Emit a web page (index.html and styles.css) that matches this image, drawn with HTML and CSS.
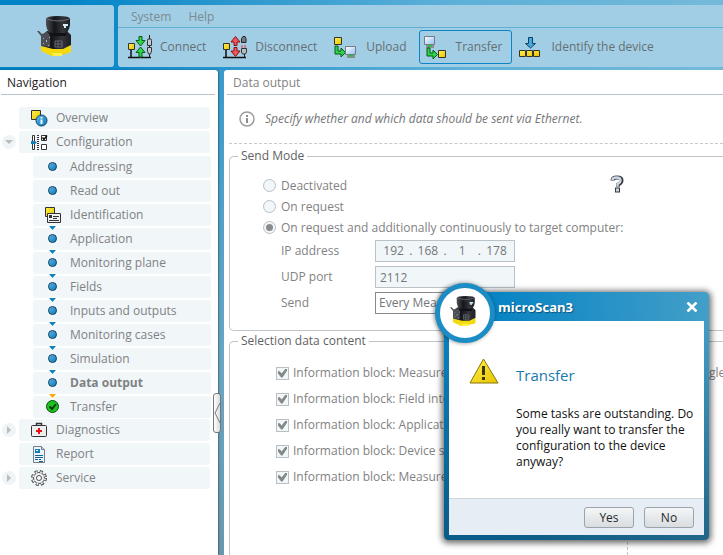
FILE: index.html
```html
<!DOCTYPE html>
<html lang="en">
<head>
<meta charset="utf-8">
<title>microScan3</title>
<link rel="stylesheet" href="styles.css">
</head>
<body>
<svg class="defs" aria-hidden="true">
  <defs>
    <linearGradient id="gYellow" x1="0" y1="0" x2="1" y2="1"><stop offset="0" stop-color="#fff04a"/><stop offset="1" stop-color="#e8c400"/></linearGradient>
    <linearGradient id="gBlue" x1="0" y1="0" x2="1" y2="1"><stop offset="0" stop-color="#5cb8ea"/><stop offset="1" stop-color="#0e78b8"/></linearGradient>
    <linearGradient id="gScreen" x1="0" y1="0" x2="1" y2="1"><stop offset="0" stop-color="#fff"/><stop offset="1" stop-color="#8fc0f4"/></linearGradient>
    <linearGradient id="gDark" x1="0" y1="0" x2="1" y2="0"><stop offset="0" stop-color="#4d5056"/><stop offset=".35" stop-color="#15161a"/><stop offset=".7" stop-color="#33353b"/><stop offset="1" stop-color="#1d1e22"/></linearGradient>
    <symbol id="device" viewBox="0 0 36 40">
      <path d="M4 27 34 29v7q-4 2-7 2l-5 2h-7L4 35z" fill="#f5d90f"/>
      <path d="M15 37h10v3h-9z" fill="#fff04a"/>
      <path d="M10 15h20l4 4v10l-8 4H16L4 30V20z" fill="url(#gDark)"/>
      <path d="M0 15l2 0 3 3 5-2 3 3v12l-9-2V20z" fill="#4b4e54"/>
      <path d="M6 22h1v1H6zM9 24h1v2H9zM6 27h1v1H6zM12 21h1v1h-1zM11 29h1v1h-1z" fill="#a9adb5"/>
      <path d="M12 15h18l-1 5H13z" fill="#111216"/>
      <path d="M9 3q0-3 12-3t12 3v6q-1 7-5 8H14q-4-1-5-8z" fill="url(#gDark)"/>
      <path d="M10 3q11 4 22 0" fill="none" stroke="#6a6d74"/>
      <path d="M26 8h5v2h-2v2h-2v-2h-1z" fill="#d5ecf5"/>
      <path d="M18 25h7v6h-7zM21 25v6M18 28h7" fill="none" stroke="#666970"/>
    </symbol>
    <symbol id="node" viewBox="0 0 24 24">
      <path d="M3 15v7M0 22.500h23" fill="none" stroke="#111" stroke-width="1.500"/>
      <path d="M.5 8.500h6v6h-6z" fill="url(#gYellow)" stroke="#333"/>
    </symbol>
    <symbol id="monitor" viewBox="0 0 12 12">
      <path d="M.5.500h10v8H.5z" fill="url(#gScreen)" stroke="#777b82"/>
      <path d="M2 9h8v3H2z" fill="#8b8e94"/><path d="M4 9h4v1.500H4z" fill="#18c92a"/>
    </symbol>
    <symbol id="elbow" viewBox="0 0 12 12"><path d="M1 1h3v5h3V3l4.500 4.500L7 12V9H1z" fill="#2fd44a" stroke="#075d16"/></symbol>
    <symbol id="dot" viewBox="0 0 16 22"><circle cx="7.500" cy="10.500" r="4" fill="url(#gBlue)" stroke="#173f5c"/></symbol>
    <symbol id="dotNext" viewBox="0 -3 16 25"><path d="M2-3h11L7.500 4z" fill="#fff"/><path d="M4-2h7L7.500 2z" fill="#0f80bb"/><circle cx="7.500" cy="10.500" r="4" fill="url(#gBlue)" stroke="#173f5c"/></symbol>
  </defs>
</svg>

<div class="app">
  <header class="top">
    <div class="brand"><svg width="36" height="40" role="img" aria-label="Laser scanner"><use href="#device"/></svg></div>
    <div class="bars">
      <nav class="menu"><a href="#system">System</a><a href="#help">Help</a></nav>
      <div class="toolbar">
        <button type="button"><svg width="24" height="24" viewBox="0 0 24 24"><use href="#node" width="24" height="24"/><path d="M11 1.500h3v4h3l-4.500 5.500L8 5.500h3zM11 22h3v-4.500h3L12.500 12 8 17.500h3z" fill="#2fd44a" stroke="#075d16"/><path d="M21.500 0v22" stroke="#222"/><path d="M19.500 5.500 20 4h3l.5 1.500v5h-4zM19.500 12.500h4V16l-1 3h-2l-1-3z" fill="#c6c9ce" stroke="#333"/></svg>Connect</button>
        <button type="button"><svg width="24" height="24" viewBox="0 0 24 24"><use href="#node" width="24" height="24"/><path d="M11 10.500h3V7h3l-4.500-5.500L8 7h3zM11 12.500h3V16h3l-4.500 5.500L8 16h3z" fill="#f0575a" stroke="#8a1015"/><path d="M20 1.500h2l1 2v4h-4.500v-4z" fill="#777b80" stroke="#222"/><path d="M19 10v3m3-3v3" stroke="#e33"/><path d="M18.500 13.500h5V17l-1 2h-3l-1-2z" fill="#b9bcc2" stroke="#333"/><path d="M21.500 19v3" stroke="#222"/></svg>Disconnect</button>
        <button type="button"><svg width="24" height="24" viewBox="0 0 24 24"><path d="M.5 2.500h7v7h-7z" fill="url(#gYellow)" stroke="#333"/><use href="#elbow" y="10" width="12" height="12"/><use href="#monitor" x="11" y="11" width="12" height="12"/></svg>Upload</button>
        <button type="button" class="active"><svg width="24" height="24" viewBox="0 0 24 24"><use href="#monitor" y="1" width="12" height="12"/><use href="#elbow" x="2" y="12" width="12" height="12"/><path d="M14.500 15.500h7v7h-7z" fill="url(#gYellow)" stroke="#333"/></svg>Transfer</button>
        <button type="button"><svg width="24" height="24" viewBox="0 0 24 24"><path d="M9.500 2.500h4v6h3L11.500 13l-5-4.500h3z" fill="#45a9e0" stroke="#123f60"/><path d="M.5 15.500h6v6h-6zM7.500 15.500h6v6h-6zM14.500 15.500h6v6h-6z" fill="url(#gYellow)" stroke="#333"/></svg>Identify the device</button>
      </div>
    </div>
  </header>

  <div class="work">
    <aside class="side">
      <h2 class="side-title">Navigation</h2>
      <ul class="tree">
        <li><div class="line"><span class="twisty"></span><a href="#overview"><svg width="17" height="17" viewBox="0 0 17 17"><path d="M.5.500h9v9h-9z" fill="url(#gYellow)" stroke="#333"/><circle cx="10.500" cy="10.500" r="5.500" fill="url(#gBlue)" stroke="#0a4770"/><path d="M10.500 9.500V14M10.500 7v1.500" stroke="#fff" stroke-width="2"/></svg>Overview</a></div></li>
        <li><div class="line"><button type="button" class="twisty toggle" aria-label="Collapse Configuration"><svg width="14" height="14" viewBox="0 0 14 14"><path d="M3 5h8L7 9z" fill="#b9bcbf"/></svg></button><a href="#configuration"><svg width="17" height="17" viewBox="0 0 17 17"><path d="M1.500 1.500h2v14h-2z" fill="#fff" stroke="#333"/><path d="M0 7h4l2 1.500L4 10H0z" fill="#0f80bb"/><path d="M7 1v15" stroke="#333" stroke-width="2" stroke-dasharray="1 1"/><path d="M10.500 1.500h5v5h-5zM10.500 10.500h5v5h-5z" fill="#fff" stroke="#333"/><path d="m11.500 3.500 1.500 2 3-4" fill="none" stroke="#111" stroke-width="1.500"/></svg>Configuration</a></div>
          <ul>
            <li><a href="#addressing"><svg width="16" height="22"><use href="#dot"/></svg>Addressing</a></li>
            <li><a href="#readout"><svg width="16" height="22"><use href="#dot"/></svg>Read out</a></li>
            <li><a href="#identification"><svg width="16" height="22" viewBox="0 0 16 22"><path d="M.5 3.500h9v9h-9z" fill="url(#gYellow)" stroke="#333"/><path d="M2.500 9.500h13v9h-13z" fill="#f0f1f2" stroke="#333"/><path d="M4 11h3v3H4z" fill="#333"/><path d="M8 12.500h6M8 14.500h4M4 16.500h10" stroke="#333"/></svg>Identification</a></li>
            <li><a href="#application"><svg class="linked" width="16" height="25"><use href="#dotNext"/></svg>Application</a></li>
            <li><a href="#plane"><svg class="linked" width="16" height="25"><use href="#dotNext"/></svg>Monitoring plane</a></li>
            <li><a href="#fields"><svg class="linked" width="16" height="25"><use href="#dotNext"/></svg>Fields</a></li>
            <li><a href="#io"><svg class="linked" width="16" height="25"><use href="#dotNext"/></svg>Inputs and outputs</a></li>
            <li><a href="#cases"><svg class="linked" width="16" height="25"><use href="#dotNext"/></svg>Monitoring cases</a></li>
            <li><a href="#simulation"><svg class="linked" width="16" height="25"><use href="#dotNext"/></svg>Simulation</a></li>
            <li><a href="#output" class="current" aria-current="page"><svg class="linked" width="16" height="25"><use href="#dotNext"/></svg>Data output</a></li>
            <li><a href="#transfer"><svg class="linked" width="16" height="25" viewBox="0 -3 16 25"><path d="M2-3h11L7.500 4z" fill="#fff"/><path d="M4-2h7L7.500 2z" fill="#f5a800"/><circle cx="7.500" cy="10.500" r="6" fill="#1dc41d" stroke="#0b4f12"/><path d="m4.500 10.500 2.500 2.500 4-5" fill="none" stroke="#0a3a0d" stroke-width="2"/></svg>Transfer</a></li>
          </ul>
        </li>
        <li><div class="line"><button type="button" class="twisty toggle" aria-label="Expand Diagnostics"><svg width="14" height="14" viewBox="0 0 14 14"><path d="M5 3v8l4-4z" fill="#b9bcbf"/></svg></button><a href="#diagnostics"><svg width="17" height="17" viewBox="0 0 17 17"><path d="M5.500 3V1.500h5V3" fill="none" stroke="#333" stroke-width="1.500"/><rect x=".5" y="3.500" width="15" height="11" rx="1" fill="#eceef0" stroke="#333"/><path d="M8 6v6M5 9h6" stroke="#e81010" stroke-width="2"/></svg>Diagnostics</a></div></li>
        <li><div class="line"><span class="twisty"></span><a href="#report"><svg width="17" height="17" viewBox="0 0 17 17"><path d="M2.500.500h8l3 3v13h-11z" fill="#eaf4fc" stroke="#777f8c"/><path d="M10.500.500v3h3" fill="#bcd" stroke="#777f8c"/><path d="M4 3h5v4H4z" fill="#0f80bb"/><path d="M4 9.500h8M4 11.500h8M4 13.500h3m1 0h2M8 15.500h4" stroke="#17618f"/><path d="M5 4.500h2" stroke="#fff"/></svg>Report</a></div></li>
        <li><div class="line"><button type="button" class="twisty toggle" aria-label="Expand Service"><svg width="14" height="14" viewBox="0 0 14 14"><path d="M5 3v8l4-4z" fill="#b9bcbf"/></svg></button><a href="#service"><svg width="17" height="17" viewBox="0 0 17 17"><circle cx="8" cy="8" r="6.500" fill="none" stroke="#4a4d50" stroke-width="3" stroke-dasharray="3 2.100"/><circle cx="8" cy="8" r="5.500" fill="#f1f2f3" stroke="#4a4d50"/><circle cx="8" cy="8" r="6" fill="none" stroke="#e9ebec" stroke-width="2" stroke-dasharray="1.700 3.010" stroke-dashoffset="-.6"/><circle cx="8" cy="8" r="2.500" fill="#fff" stroke="#4a4d50"/></svg>Service</a></div></li>
      </ul>
      <button type="button" class="handle" aria-label="Collapse navigation"><svg width="6" height="22" viewBox="0 0 6 22"><path d="M6 1 1 11l5 10" fill="none" stroke="#777"/></svg></button>
    </aside>

    <main class="page">
      <h1 class="page-title">Data output</h1>
      <p class="hint"><svg width="16" height="16" viewBox="0 0 16 16"><circle cx="8" cy="8" r="7" fill="#fff" stroke="#9b9b9b" stroke-width="1.500"/><path d="M8 7v5M8 4v2" stroke="#8d8d8d" stroke-width="2"/></svg>Specify whether and which data should be sent via Ethernet.</p>
      <fieldset class="send">
        <legend>Send Mode</legend>
        <div class="send-form">
          <label class="option"><input type="radio" name="mode" disabled>Deactivated</label>
          <label class="option"><input type="radio" name="mode" disabled>On request</label>
          <label class="option"><input type="radio" name="mode" checked disabled>On request and additionally continuously to target computer:</label>
          <div class="fields">
            <label for="ip1">IP address</label>
            <div class="ip" role="group" aria-label="IP address"><input id="ip1" value="192" disabled>.<input aria-label="Second octet" value="168" disabled>.<input aria-label="Third octet" value="1" disabled>.<input aria-label="Fourth octet" value="178" disabled></div>
            <label for="port">UDP port</label>
            <input id="port" class="field" value="2112" disabled>
            <label for="rate">Send</label>
            <select id="rate" class="field rate" disabled><option>Every Measurement</option></select>
          </div>
        </div>
        <button type="button" class="help" aria-label="Context help"><svg width="14" height="18" viewBox="0 0 14 18"><path d="M2.500 5.500Q2.500 2.500 7 2.500t4.500 3Q11.500 8 8 9.500v2" fill="none" stroke="#35393e" stroke-width="4"/><path d="M5 12.500h5v5H5z" fill="#35393e"/><path d="M2.500 5Q2.500 2.500 6.500 2.500t4 3Q10.500 7.500 7.500 9v2" fill="none" stroke="#c9d4de" stroke-width="2.500"/><path d="M6 13.500h3v3H6z" fill="#c9d4de"/></svg></button>
      </fieldset>
      <fieldset class="content">
        <legend>Selection data content</legend>
        <div class="blocks">
          <label class="block"><input type="checkbox" checked disabled>Information block: Measurement data</label>
          <label class="block"><input type="checkbox" checked disabled>Information block: Field interruption</label>
          <label class="block"><input type="checkbox" checked disabled>Information block: Application data</label>
          <label class="block"><input type="checkbox" checked disabled>Information block: Device status</label>
          <label class="block"><input type="checkbox" checked disabled>Information block: Measurement data</label>
        </div>
        <div class="details">Angle</div>
      </fieldset>
    </main>
  </div>
</div>

<div class="dialog" role="dialog" aria-labelledby="dlg-name" aria-describedby="dlg-text">
  <div class="badge"><svg width="27" height="30"><use href="#device"/></svg></div>
  <div class="dialog-bar"><strong id="dlg-name">microScan3</strong><button type="button" class="close" aria-label="Close"><svg width="12" height="10" viewBox="0 0 12 10"><path d="m1.500.500 9 9m0-9-9 9" stroke="#fff" stroke-width="2.600"/></svg></button></div>
  <div class="dialog-body">
    <svg width="30" height="26" viewBox="0 0 30 26"><path d="M14.500 1 29 25H1z" fill="url(#gYellow)" stroke="#8a7508" stroke-linejoin="round"/><path d="M14.500 8v9M14.500 19v3" stroke="#3d3606" stroke-width="3"/></svg>
    <div>
      <h2>Transfer</h2>
      <p id="dlg-text">Some tasks are outstanding. Do you really want to transfer the configuration to the device anyway?</p>
    </div>
  </div>
  <div class="dialog-foot"><button type="button">Yes</button><button type="button">No</button></div>
</div>
</body>
</html>
```
FILE: styles.css
```css
* { box-sizing: border-box; }

body {
  margin: 0;
  height: 100vh;
  overflow: hidden;
  font: 12px/16px "Open Sans", "Noto Sans", sans-serif;
  color: #7f8283;
  background: linear-gradient(90deg, #0083c7 8%, #2d98cf 33%, #5cb0d8 62%, #74b9da);
}

button, input, select { font: inherit; color: inherit; }
button { cursor: pointer; }
a { color: inherit; text-decoration: none; }
svg { display: block; flex: none; }
h1, h2, p { margin: 0; font-size: 12px; font-weight: normal; }
ul { margin: 0; padding: 0; list-style: none; }

.defs { position: absolute; width: 0; height: 0; }

.app { display: flex; flex-direction: column; height: 100%; padding-top: 5px; gap: 3px; }

.top { display: flex; gap: 4px; }
.brand {
  width: 114px;
  padding: 11px 0 0 37px;
  background: #a1cee4;
  border-radius: 0 3px 3px 0;
}
.bars { flex: 1; min-width: 0; background: #a1cee4; border-radius: 3px 0 0 3px; }
.menu {
  display: flex;
  gap: 17px;
  height: 23px;
  padding: 4px 13px;
  border-bottom: 1px solid #5eafd6;
  color: #7b8a92;
}
.toolbar { display: flex; gap: 2px; padding: 2px 5px 3px; color: #666e73; }
.toolbar button {
  display: flex;
  align-items: center;
  gap: 8px;
  height: 34px;
  padding: 0 9px 0 4px;
  white-space: nowrap;
  background: none;
  border: 1px solid transparent;
  border-radius: 3px;
}
.toolbar .active { border-color: #0a84c4; }

.work {
  display: flex;
  flex: 1;
  min-height: 0;
  gap: 6px;
  background: linear-gradient(#3b9ccc, #69a6c4 60%, #6998ae) content-box no-repeat 218px 0 / 6px 100%;
}

.side { position: relative; width: 218px; background: #fff; border-radius: 0 3px 0 0; box-shadow: 1px 0 2px #0005; }
.side-title {
  height: 25px;
  margin: 0 3px 12px 1px;
  padding: 5px 6px;
  border-bottom: 1px solid #b9c1c9;
  color: #1d2023;
}
.line { display: flex; align-items: center; gap: 3px; padding-left: 2px; }
.tree > li { padding-bottom: 2px; }
.tree > li:nth-child(2) { padding-bottom: 1px; }
.tree ul { display: grid; gap: 2px; padding: 3px 0 0 33px; }
.tree a {
  display: flex;
  flex: 1;
  align-items: center;
  gap: 8px;
  height: 22px;
  margin-right: 8px;
  padding-left: 12px;
  background: #f1f6f9;
  border-radius: 3px;
}
.tree ul a { gap: 9px; margin-right: 7px; }
.tree .current { font-weight: bold; }
.linked { margin-top: -3px; }
.twisty { width: 14px; height: 14px; padding: 0; border: 0; border-radius: 50%; }
.toggle { background: #eff4f7; }
.handle {
  position: absolute;
  top: 323px;
  right: -3px;
  width: 8px;
  height: 40px;
  padding: 0;
  background: linear-gradient(90deg, #fff, #d9dcde);
  border: 1px solid #777;
  border-radius: 3px;
}

.page { flex: 1; min-width: 0; display: flex; flex-direction: column; background: #fff; border-radius: 3px 0 0 0; overflow: hidden; }
.page-title {
  height: 25px;
  margin-left: 3px;
  padding: 5px 6px;
  border-bottom: 1px solid #b9c1c9;
}
.hint {
  display: flex;
  align-items: center;
  gap: 10px;
  height: 49px;
  margin-left: 5px;
  padding-left: 10px;
  font-style: italic;
  border-bottom: 1px dashed #c8c8c8;
  color: #747678;
}
fieldset {
  display: flex;
  margin: 0 0 0 5px;
  padding: 11px 0 0;
  border: 1px solid #bfc4c8;
  border-right: 0;
  border-radius: 5px 0 0 5px;
}
legend { margin-left: 8px; padding: 0 3px; color: #5f6264; }
.send { margin-top: 4px; gap: 3px; padding-bottom: 16px; }
.send-form { width: 377px; padding-left: 33px; white-space: nowrap; }
.option, .block { display: flex; align-items: center; }
.option { gap: 5px; height: 21px; }
.block { gap: 4px; height: 26px; white-space: nowrap; }

input[type="radio"], input[type="checkbox"] {
  appearance: none;
  flex: none;
  display: grid;
  place-items: center;
  width: 13px;
  height: 13px;
  margin: 0;
  background: #f1f6f9;
  border: 1px solid #b9bfc4;
}
input[type="radio"] { border-radius: 50%; }
input[type="radio"]:checked::before { content: ""; width: 7px; height: 7px; background: #8a8a8a; border-radius: 50%; }
input[type="checkbox"]:checked::before {
  content: "";
  width: 9px;
  height: 9px;
  background: #858789;
  clip-path: polygon(0 30%, 20% 30%, 40% 55%, 85% 0, 100% 0, 100% 25%, 50% 100%, 35% 100%, 0 55%);
}

.fields {
  display: grid;
  grid-template-columns: 94px 140px;
  gap: 4px 0;
  align-items: center;
  margin: 2px 0 0 18px;
}
.field, .ip { width: 100%; height: 22px; background: #f1f6f9; border: 1px solid #b9c1c9; border-radius: 0; }
.field { padding: 0 4px; }
.ip { display: flex; align-items: center; padding: 0 2px; color: #747779; }
.ip input { flex: 1; min-width: 0; padding: 0; text-align: center; background: none; border: 0; }
.field:disabled, .ip input:disabled { color: #747779; opacity: 1; }
.field.rate { appearance: none; padding: 0 3px; background: #fff; border-color: #858a8e; }
.help { align-self: flex-start; padding: 0; background: none; border: 0; }

.content { flex: 1; margin-top: 2px; border-bottom: 0; border-bottom-left-radius: 0; }
.blocks { width: 397px; padding-left: 46px; }
.details { flex: 1; padding: 5px 0 0 66px; border-left: 1px dashed #c4c4c4; }

.dialog {
  position: absolute;
  top: 292px;
  left: 444px;
  width: 265px;
  padding: 0 5px 5px;
  background: linear-gradient(#0000 10%, #0a405f99), linear-gradient(90deg, #0884c4 20%, #439fc8);
  border-radius: 4px;
  box-shadow: 0 1px 6px 2px #0009;
}
.badge {
  position: absolute;
  top: -9px;
  left: -9px;
  display: grid;
  place-items: center;
  width: 60px;
  height: 60px;
  padding: 0 4px 4px 0;
  background: #fff;
  border: 5px solid #1c8cc4;
  border-radius: 50%;
  box-shadow: -1px 0 4px #0007;
}
.dialog-bar {
  display: flex;
  align-items: center;
  justify-content: space-between;
  height: 29px;
  padding: 0 6px 0 49px;
  color: #fff;
  font-size: 13px;
  text-shadow: 1px 1px 1px #0006;
}
.close { padding: 0; background: none; border: 0; }
.dialog-body {
  display: flex;
  gap: 17px;
  height: 177px;
  padding: 37px 4px 0 20px;
  background: #fff;
  color: #111;
}
.dialog-body h2 { margin: 6px 0 20px; font-size: 15px; line-height: 22px; color: #1a7aab; }
.dialog-foot {
  display: flex;
  justify-content: flex-end;
  gap: 10px;
  padding: 8px 10px 7px;
  background: #e6edf4;
  border-top: 1px solid #cdd6da;
}
.dialog-foot button {
  width: 50px;
  height: 21px;
  padding: 0;
  color: #24282b;
  background: linear-gradient(#f4f6f7, #d9dddf);
  border: 1px solid #9aa4aa;
  border-radius: 3px;
}
```
